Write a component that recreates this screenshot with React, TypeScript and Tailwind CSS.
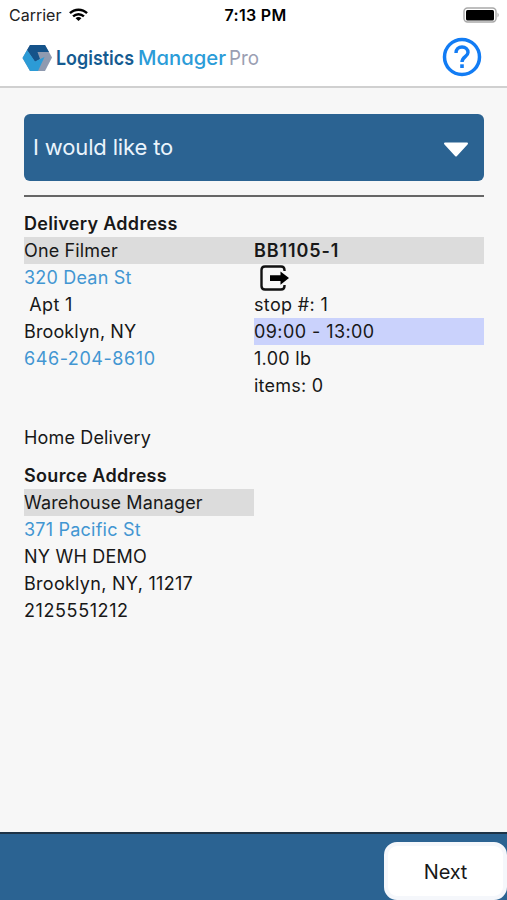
interface Line {
  text: string;
  className?: string;
}

const deliveryLines: Line[] = [
  { text: '320 Dean St', className: 'text-[#4296d2] tracking-[0.2px]' },
  { text: ' Apt 1', className: 'tracking-[0.3px]' },
  { text: 'Brooklyn, NY', className: 'tracking-[0.12px]' },
  { text: '646-204-8610', className: 'text-[#4296d2] tracking-[0.56px]' },
];

const stopLines: Line[] = [
  { text: 'stop #: 1', className: 'tracking-[0.35px]' },
  { text: '09:00 - 13:00', className: 'bg-[#cad2fc] tracking-[0.42px]' },
  { text: '1.00 lb', className: 'tracking-[0.3px]' },
  { text: 'items: 0', className: 'tracking-[0.25px]' },
];

const sourceLines: Line[] = [
  { text: 'Warehouse Manager', className: 'bg-[#dcdcdc] w-[230px] tracking-[0.13px]' },
  { text: '371 Pacific St', className: 'text-[#4296d2] tracking-[0.22px]' },
  { text: 'NY WH DEMO', className: 'tracking-[0.2px]' },
  { text: 'Brooklyn, NY, 11217', className: 'tracking-[0.28px]' },
  { text: '2125551212', className: 'tracking-[0.6px]' },
];

function Lines({ items }: { items: Line[] }) {
  return (
    <>
      {items.map((line) => (
        <p key={line.text} className={`whitespace-pre ${line.className ?? ''}`}>
          {line.text}
        </p>
      ))}
    </>
  );
}

function WifiIcon() {
  return (
    <svg width="19" height="14" viewBox="0 0 20 14" fill="none" stroke="#000" strokeWidth="2.5">
      <path d="M1 5.1C6 .2 14 .2 19 5.1" />
      <path d="M4.3 8.5C7.5 5.4 12.5 5.4 15.7 8.5" />
      <path d="M10 13.4 6.9 10.3C8.6 8.8 11.4 8.8 13.1 10.3Z" fill="#000" stroke="none" />
    </svg>
  );
}

function Battery() {
  return (
    <svg width="37" height="17" viewBox="0 0 37 17">
      <rect x="1" y="1" width="32" height="14" rx="3.5" fill="#fff" stroke="#a9a9a9" strokeWidth="1.4" />
      <rect x="3" y="3" width="28" height="10.5" rx="1.5" fill="#000" />
      <path d="M34.5 5.5Q37 8 34.5 10.5Z" fill="#a9a9a9" />
    </svg>
  );
}

function Logo() {
  return (
    <svg width="240" height="32" viewBox="0 0 240 32" className="font-['Inter',sans-serif] text-[20px] [font-feature-settings:'cv11']">
      {/* Hexagon with three interlocking faces */}
      <path d="M8 4H23L30 16.5 23 30H8L.5 17Z" fill="#8f9ab0" />
      <path d="M8 4H23L27 11H15.5L18 18 13 21 5 9Z" fill="#15538a" />
      <path d="M5 9 13 20.5 22.5 16 16 30H8L.5 17Z" fill="#2c9bd6" />
      <text x="34" y="24" fontWeight="600" fill="#155b91" textLength="78" lengthAdjust="spacingAndGlyphs">Logistics</text>
      <text x="116" y="24" fontWeight="500" fill="#2b9cd8" textLength="88" lengthAdjust="spacingAndGlyphs">Manager</text>
      <text x="207" y="24" fontWeight="400" fill="#9a9eb2" textLength="30" lengthAdjust="spacingAndGlyphs">Pro</text>
    </svg>
  );
}

function HelpIcon() {
  return (
    <svg width="40" height="40" viewBox="0 0 40 40" fill="none" stroke="#127cf4">
      <circle cx="20" cy="20" r="17.5" strokeWidth="3.5" />
      <path d="M14 16C14 12.2 16.6 10 20 10S26 12.4 26 15.5C26 19.5 20 20 20 25" strokeWidth="3.4" />
      <path d="M20 27.3V31" strokeWidth="3.6" />
    </svg>
  );
}

function ExitIcon() {
  return (
    <svg width="30" height="26" viewBox="0 0 30 26" fill="none" stroke="#111" strokeWidth="2.4">
      <path d="M24.5 6V5Q24.5 1.5 21 1.5H5Q1.5 1.5 1.5 5V21Q1.5 24.5 5 24.5H21Q24.5 24.5 24.5 21V20" />
      <path d="M10 10.3H20.5V6.5L29 13.1 20.5 19.7V16H10Z" fill="#000" stroke="none" />
    </svg>
  );
}

export default function App() {
  return (
    <div className="flex h-[900px] w-[507px] flex-col overflow-hidden bg-[#f7f7f7] font-['Inter',sans-serif] text-[18px] leading-[27px] text-[#181818]">
      {/* Status bar and logo */}
      <header className="h-[88px] shrink-0 border-b-2 border-[#d0d0d0] bg-white">
        <div className="grid h-[30px] grid-cols-3 items-center pl-[9px] pr-[7px] text-[16px] leading-[30px] text-[#222]">
          <div className="flex items-center gap-2">
            <span>Carrier</span>
            <WifiIcon />
          </div>
          <span className="pl-0.5 text-center font-semibold tracking-[0.3px] text-black">7:13 PM</span>
          <div className="flex justify-end">
            <Battery />
          </div>
        </div>
        <div className="flex h-[54px] items-center justify-between pl-[22px] pr-[25px]">
          <Logo />
          <HelpIcon />
        </div>
      </header>

      <main className="flex-1 pl-6 pr-[23px] pt-[26px]">
        <button className="flex h-[67px] w-full items-center justify-between rounded-[6px] bg-[#2b6392] pl-[9px] pr-[15px] text-[22px] text-[#eaf4fc]">
          <span className="pb-px tracking-[-0.15px]">I would like to</span>
          <svg width="26" height="16" viewBox="0 0 26 16" className="mt-[5px]">
            <path d="M2 1.5H24L13 13.5Z" fill="#fff" stroke="#fff" strokeWidth="2" strokeLinejoin="round" />
          </svg>
        </button>
        <div className="mt-[14px] h-[2px] bg-[#666]" />

        {/* Delivery */}
        <h2 className="mt-[13px] font-semibold tracking-[0.3px]">Delivery Address</h2>
        <div className="grid grid-cols-2 bg-[#dcdcdc]">
          <span className="tracking-[0.15px]">One Filmer</span>
          <span className="font-semibold tracking-[0.9px]">BB1105-1</span>
        </div>
        <div className="grid grid-cols-2">
          <div>
            <Lines items={deliveryLines} />
          </div>
          <div>
            <div className="flex h-[27px] items-center pl-[6px]">
              <ExitIcon />
            </div>
            <Lines items={stopLines} />
          </div>
        </div>
        <p className="mt-[25px] tracking-[0.15px]">Home Delivery</p>

        {/* Source */}
        <h2 className="mt-[11px] font-semibold tracking-[0.32px]">Source Address</h2>
        <Lines items={sourceLines} />
      </main>

      <footer className="flex h-[68px] shrink-0 justify-end border-t-2 border-[#1e3346] bg-[#2b6392] pt-2">
        <button className="h-[58px] w-[123px] rounded-[13px] border-4 border-[#f5f7fb] bg-white text-[20px]">
          <span className="relative top-px tracking-[-0.2px]">Next</span>
        </button>
      </footer>
    </div>
  );
}
